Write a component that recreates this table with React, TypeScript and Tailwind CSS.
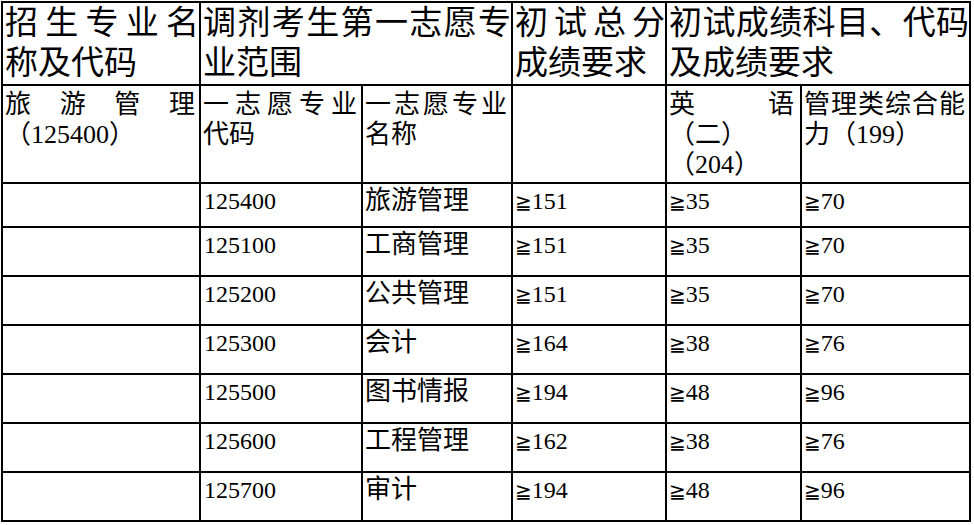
const rows = [
  ['125400', '旅游管理', '151', '35', '70'],
  ['125100', '工商管理', '151', '35', '70'],
  ['125200', '公共管理', '151', '35', '70'],
  ['125300', '会计', '164', '38', '76'],
  ['125500', '图书情报', '194', '48', '96'],
  ['125600', '工程管理', '162', '38', '76'],
  ['125700', '审计', '194', '48', '96'],
]

// ≧ is narrower in the source document than the CJK glyph, so take it from DejaVu
function Ge({ value }: { value: string }) {
  return (
    <span>
      <span className="font-['DejaVu_Sans',sans-serif] text-[20px] leading-none">≧</span>
      {value}
    </span>
  )
}

const base = "border-2 border-black align-top font-['Liberation_Serif','Noto_Sans_CJK_SC',serif] [text-spacing-trim:space-all]"

export default function App() {
  const head = base + ' text-justify text-[33px] leading-[40px] pl-[2px] pr-0 pt-0'
  const sub = base + ' text-justify text-[26px] leading-[30px] pl-[2px] pr-[4px] pt-[4px]'
  const cell = base + ' text-left text-[24px] leading-[30px] pr-[4px] pt-[2px]'

  return (
    <div className="w-[974px] h-[525px] bg-white text-black overflow-hidden pt-px pl-px font-['Liberation_Serif','Noto_Sans_CJK_SC',serif]">
      <table className="table-fixed border-collapse w-[970px]">
        <colgroup>
          <col className="w-[198px]" />
          <col className="w-[162px]" />
          <col className="w-[150px]" />
          <col className="w-[154px]" />
          <col className="w-[135px]" />
          <col className="w-[169px]" />
        </colgroup>
        <tbody>
          <tr className="h-[83px]">
            <td className={head}>招生专业名称及代码</td>
            <td className={head} colSpan={2}>调剂考生第一志愿专业范围</td>
            <td className={head}>初试总分成绩要求</td>
            <td className={head} colSpan={2}>初试成绩科目、代码及成绩要求</td>
          </tr>
          <tr className="h-[98px]">
            <td className={sub}>旅游管理（125400）</td>
            <td className={sub}>一志愿专业代码</td>
            <td className={sub}>一志愿专业名称</td>
            <td className={sub}></td>
            <td className={sub + ' pr-[6px]'}>
              <div className="flex justify-between">
                <span>英</span>
                <span>语</span>
              </div>
              <div>（二）</div>
              <div>（204）</div>
            </td>
            <td className={sub}>管理类综合能力（199）</td>
          </tr>
          {rows.map((r, i) => (
            <tr key={r[0]} className={i === 0 ? 'h-[44px]' : 'h-[49px]'}>
              <td className={cell + ' pl-[3px]'}></td>
              <td className={cell + ' pl-[3px]'}>{r[0]}</td>
              <td className={cell + ' pl-[2px]'}>
                <span className="text-[26px]">{r[1]}</span>
              </td>
              <td className={cell + ' pl-[2px]'}><Ge value={r[2]} /></td>
              <td className={cell + ' pl-[2px]'}><Ge value={r[3]} /></td>
              <td className={cell + ' pl-[2px]'}><Ge value={r[4]} /></td>
            </tr>
          ))}
        </tbody>
      </table>
    </div>
  )
}
